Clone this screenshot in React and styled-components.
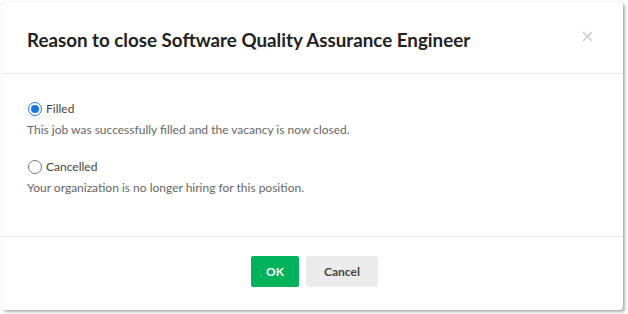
import React, { useState } from "react";
import styled, { createGlobalStyle } from "styled-components";

const GlobalStyle = createGlobalStyle`
  html, body {
    margin: 0;
    padding: 0;
    background: #fff;
  }
  body {
    font-family: "Lato", "Open Sans", sans-serif;
    color: #333;
  }
`;

const Page = styled.div`
  width: 628px;
  height: 314px;
  padding: 2px 5px 4px 2px;
  box-sizing: border-box;
`;

const Modal = styled.div`
  height: 100%;
  background: #fff;
  border-radius: 3px;
  box-shadow: 0 0 1px rgba(0, 0, 0, 0.35), 2px 2px 3px rgba(0, 0, 0, 0.3);
  display: flex;
  flex-direction: column;
`;

const Header = styled.div`
  height: 72px;
  box-sizing: border-box;
  border-bottom: 1px solid #eaeaea;
  display: flex;
  align-items: center;
  justify-content: space-between;
  padding: 4px 30px 0 25px;
`;

const Title = styled.h2`
  margin: 0;
  font-size: 18.75px;
  font-weight: 700;
  color: #222;
`;

const Close = styled.button`
  border: 0;
  background: none;
  padding: 0;
  margin-top: -6px;
  cursor: pointer;
  display: flex;
`;

const Body = styled.div`
  flex: 1;
  border-bottom: 1px solid #eaeaea;
  padding: 27px 25px 0;
  display: flex;
  flex-direction: column;
  gap: 22px;
`;

const Option = styled.label`
  display: flex;
  flex-direction: column;
  gap: 6px;
  cursor: pointer;
`;

const OptionRow = styled.span`
  display: flex;
  align-items: center;
  gap: 4px;
  font-size: 12px;
  color: #444;
`;

const Radio = styled.span`
  width: 14px;
  height: 14px;
  box-sizing: border-box;
  border-radius: 50%;
  border: 1px solid ${(p) => (p.checked ? "#1a73e8" : "#767676")};
  margin-left: 1px;
  display: flex;
  align-items: center;
  justify-content: center;
  &::after {
    content: "";
    width: 8px;
    height: 8px;
    border-radius: 50%;
    background: ${(p) => (p.checked ? "#1a73e8" : "transparent")};
  }
`;

const Description = styled.span`
  font-size: 12px;
  color: #666;
`;

const Footer = styled.div`
  height: 73px;
  box-sizing: border-box;
  padding: 0 0 5px 4px;
  display: flex;
  align-items: center;
  justify-content: center;
  gap: 7px;
`;

const Button = styled.button`
  height: 31px;
  border: 0;
  border-radius: 2px;
  font-family: "Lato", "Open Sans", sans-serif;
  font-size: 12px;
  font-weight: 700;
  padding: 0 ${(p) => (p.primary ? "15px" : "18px")};
  background: ${(p) => (p.primary ? "#00b259" : "#ebebeb")};
  color: ${(p) => (p.primary ? "#fff" : "#444")};
  cursor: pointer;
`;

const options = [
  {
    key: "filled",
    label: "Filled",
    text: "This job was successfully filled and the vacancy is now closed.",
  },
  {
    key: "cancelled",
    label: "Cancelled",
    text: "Your organization is no longer hiring for this position.",
  },
];

export default function App() {
  const [reason, setReason] = useState("filled");
  return (
    <>
      <GlobalStyle />
      <Page>
        <Modal>
          <Header>
            <Title>Reason to close Software Quality Assurance Engineer</Title>
            <Close aria-label="Close">
              <svg width="11" height="11" viewBox="0 0 11 11">
                <path d="M1 1L10 10M10 1L1 10" stroke="#c8c8c8" strokeWidth="1.3" />
              </svg>
            </Close>
          </Header>
          <Body>
            {options.map((o) => (
              <Option key={o.key} onClick={() => setReason(o.key)}>
                <OptionRow>
                  <Radio checked={reason === o.key} />
                  {o.label}
                </OptionRow>
                <Description>{o.text}</Description>
              </Option>
            ))}
          </Body>
          <Footer>
            <Button primary>OK</Button>
            <Button>Cancel</Button>
          </Footer>
        </Modal>
      </Page>
    </>
  );
}
